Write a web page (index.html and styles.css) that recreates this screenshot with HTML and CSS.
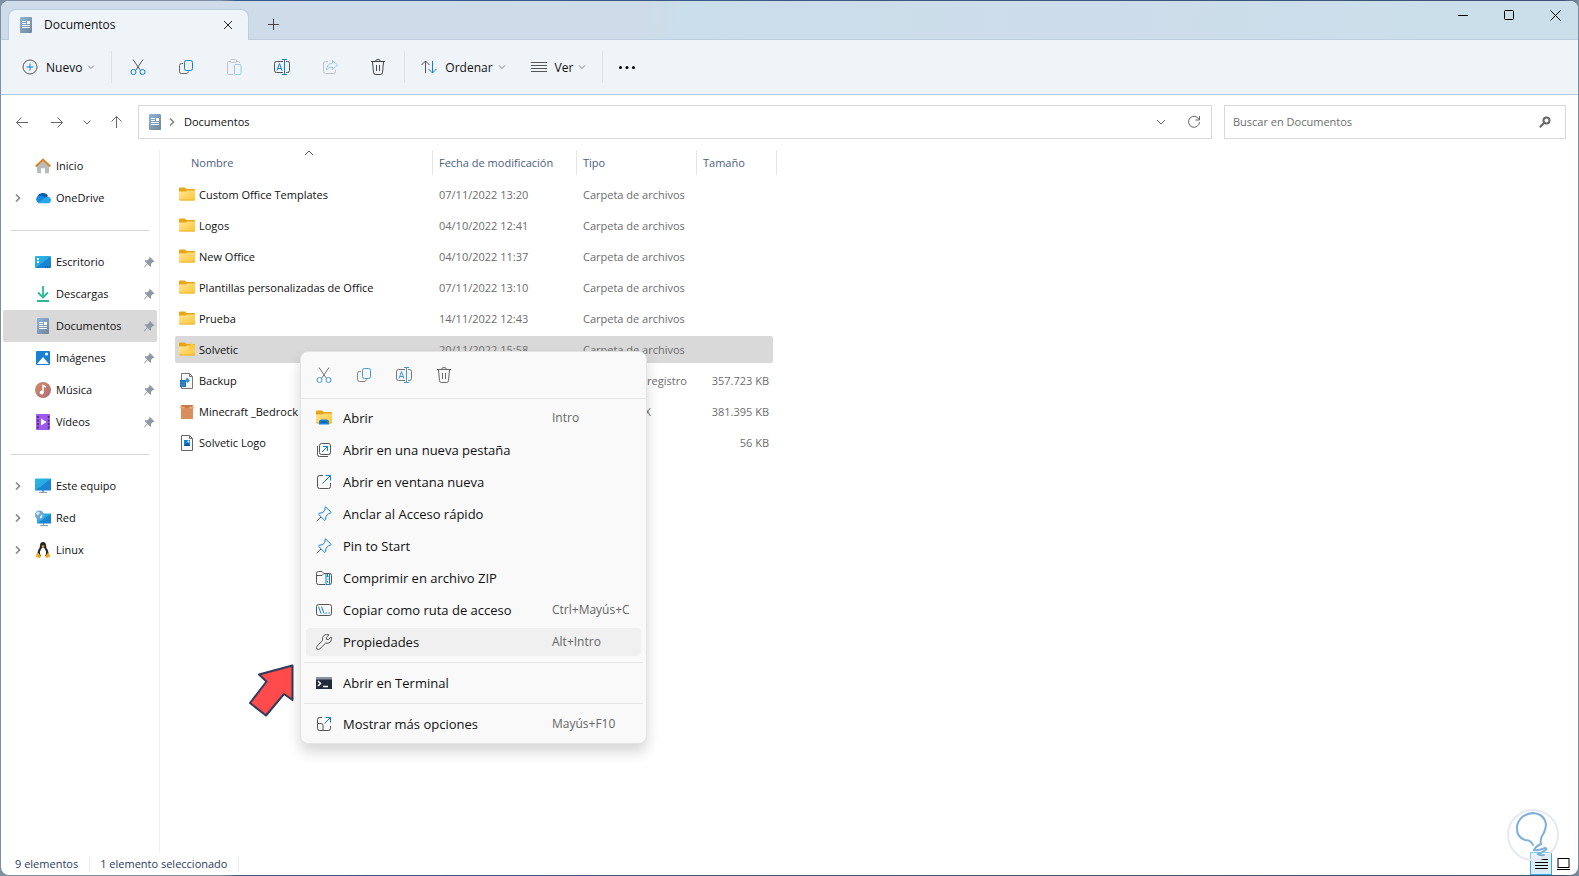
FILE: index.html
```html
<!DOCTYPE html>
<html lang="es">
<head>
    <meta charset="UTF-8">
    <meta name="viewport" content="width=device-width, initial-scale=1.0">
    <title>Documentos</title>
    <link rel="stylesheet" href="styles.css">
</head>
<body>
    <!-- Shared icons -->
    <svg class="sprite" aria-hidden="true">
        <defs>
            <linearGradient id="docFill" x1="0" y1="0" x2="1" y2="1">
                <stop offset="0" stop-color="#8fb4d9"/>
                <stop offset="1" stop-color="#6f8596"/>
            </linearGradient>
            <linearGradient id="folderFill" x1="0" y1="0" x2="1" y2="1">
                <stop offset="0" stop-color="#ffe59a"/>
                <stop offset="1" stop-color="#ffc52e"/>
            </linearGradient>
            <linearGradient id="screenFill" x1="0" y1="0" x2="1" y2="1">
                <stop offset="0" stop-color="#2fb9e8"/>
                <stop offset="0.5" stop-color="#26a9df"/>
                <stop offset="0.52" stop-color="#1a86d6"/>
                <stop offset="1" stop-color="#1a7fd2"/>
            </linearGradient>
            <linearGradient id="musicFill" x1="0" y1="0" x2="1" y2="1">
                <stop offset="0" stop-color="#d08f63"/>
                <stop offset="1" stop-color="#ad6b7b"/>
            </linearGradient>
        </defs>
        <symbol id="doc" viewBox="0 0 16 16">
            <rect x="2" width="12" height="16" rx="1" fill="url(#docFill)"/>
            <path d="M4 4.500h4M4 6.500h4M4 8.500h8M4 10.500h8" stroke="#fff"/>
            <path d="M9 4h3v3H9z" fill="#fff"/>
        </symbol>
        <symbol id="folder" viewBox="0 0 16 16">
            <path d="M0 1.500q0-1 1-1h5l1.500 1.500H15q1 0 1 1V6H0z" fill="#e8a517"/>
            <path d="M0 4.500h7l1-1h8v9q0 1-1 1H1q-1 0-1-1z" fill="url(#folderFill)"/>
            <path d="M0 12.500h16q0 1-1 1H1q-1 0-1-1z" fill="#e9b536"/>
        </symbol>
        <symbol id="cut" viewBox="0 0 16 16">
            <path d="M3 .5l7.500 11M13 .5L5.500 11.500" fill="none" stroke="#555"/>
            <circle cx="3.500" cy="13" r="2.500" fill="none" stroke="#0f7fd6"/>
            <circle cx="12.500" cy="13" r="2.500" fill="none" stroke="#0f7fd6"/>
        </symbol>
        <symbol id="copy" viewBox="0 0 16 16">
            <path d="M5 4.500H3.500q-2 0-2 2v6q0 2 2 2H8q2 0 2.500-2" fill="none" stroke="#666"/>
            <rect x="6.500" y="1.500" width="8" height="10" rx="2" fill="none" stroke="#0f7fd6"/>
        </symbol>
        <symbol id="paste" viewBox="0 0 16 16">
            <path d="M4.500 2.500h-2q-1 0-1 1v11q0 1 1 1H7M10.500 2.500h2q1 0 1 1V4" fill="none" stroke="#c0c3c6"/>
            <rect x="4.500" y=".5" width="6" height="3" rx="1" fill="none" stroke="#c0c3c6"/>
            <rect x="8.500" y="5.500" width="6.500" height="10" rx="1" fill="none" stroke="#9cc9ea"/>
        </symbol>
        <symbol id="rename" viewBox="0 0 16 16">
            <path d="M9 2.500H2.500q-2 0-2 2v7q0 2 2 2H9M12 2.500h1.500q2 0 2 2v7q0 2-2 2H12" fill="none" stroke="#555"/>
            <path d="M8 .5h5M8 15.500h5M10.500.5v15M3 11.500l2.500-7 2.500 7M4 9.500h3" fill="none" stroke="#0f7fd6"/>
        </symbol>
        <symbol id="share" viewBox="0 0 16 16">
            <path d="M6 2.500H3.500q-2 0-2 2v8q0 2 2 2h8q2 0 2-2V11" fill="none" stroke="#c0c3c6"/>
            <path d="M10.500 1.500l5 4.500-5 4.500V8Q6.500 8 4.500 11q.5-6.500 6-7z" fill="none" stroke="#9cc9ea" stroke-linejoin="round"/>
        </symbol>
        <symbol id="trash" viewBox="0 0 16 16">
            <path d="M1 2.500h14M5.500 2.500q0-2 2.500-2t2.500 2M2.500 3l1 10.500q.2 2 2 2h5q1.800 0 2-2L13.500 3M6.500 6v6M9.500 6v6" fill="none" stroke="#444"/>
        </symbol>
        <symbol id="chev-down" viewBox="0 0 8 8">
            <path d="M1 2.500l3 3 3-3" fill="none" stroke="currentColor"/>
        </symbol>
        <symbol id="chev-right" viewBox="0 0 8 8">
            <path d="M2 .5L5.500 4 2 7.500" fill="none" stroke="currentColor" stroke-width="1.600"/>
        </symbol>
        <symbol id="pin" viewBox="0 0 12 12">
            <path d="M7 1l4.500 4.500-1 .5-1 .2-1.500 1.700.1 2.100-.8.800-2.800-2.800L1.500 11.500l-.6-.5L4 7.300 1.500 5l.8-.8 2.400.1L6.200 2.800 6.400 1.600z" fill="#8d99a5"/>
        </symbol>
        <symbol id="pin-line" viewBox="0 0 16 16">
            <path d="M9.500.8l5.700 5.700-1 .8-1.500.2-2.700 2.800-.3 3.200-1 .9-6.300-6.200.9-1.100 3.300-.3 2.300-2.600.1-2.100z" fill="none" stroke="#0f7fd6" stroke-linejoin="round"/>
            <path d="M5 11L.7 15.300" stroke="#555"/>
        </symbol>
        <symbol id="monitor" viewBox="0 0 16 16">
            <path d="M7 12h2v2.500H7z" fill="#8da0ac"/>
            <path d="M4 14.500h8" stroke="#8da0ac"/>
            <rect x="0" y=".5" width="16" height="12" rx=".5" fill="url(#screenFill)"/>
        </symbol>
    </svg>

    <div class="window">
        <header class="titlebar">
            <div class="tab">
                <svg class="icon"><use href="#doc"/></svg>
                <span class="tab-title">Documentos</span>
                <button class="tab-close" aria-label="Cerrar pestaña">
                    <svg width="10" height="10" viewBox="0 0 10 10"><path d="M1 1l8 8M9 1L1 9" stroke="#222"/></svg>
                </button>
            </div>
            <button class="new-tab" aria-label="Nueva pestaña">
                <svg width="11" height="11" viewBox="0 0 11 11"><path d="M5.500 0v11M0 5.500h11" stroke="#444"/></svg>
            </button>
            <div class="window-controls">
                <button aria-label="Minimizar"><svg width="11" height="11" viewBox="0 0 11 11"><path d="M0 5.500h10" stroke="#000"/></svg></button>
                <button aria-label="Maximizar"><svg width="11" height="11" viewBox="0 0 11 11"><rect x=".5" y=".5" width="9" height="9" rx="1" fill="none" stroke="#000"/></svg></button>
                <button aria-label="Cerrar"><svg width="11" height="11" viewBox="0 0 11 11"><path d="M.5.5l10 10M10.500.5l-10 10" stroke="#000"/></svg></button>
            </div>
        </header>

        <div class="toolbar">
            <button class="tool tool-new">
                <svg class="icon" viewBox="0 0 16 16"><circle cx="8" cy="8" r="7" fill="none" stroke="#555"/><path d="M8 4.500v7M4.500 8h7" stroke="#0f7fd6"/></svg>
                <span>Nuevo</span>
                <svg class="chev"><use href="#chev-down"/></svg>
            </button>
            <div class="tool-group">
                <button class="tool-icon" aria-label="Cortar"><svg class="icon"><use href="#cut"/></svg></button>
                <button class="tool-icon" aria-label="Copiar"><svg class="icon"><use href="#copy"/></svg></button>
                <button class="tool-icon" aria-label="Pegar"><svg class="icon"><use href="#paste"/></svg></button>
                <button class="tool-icon" aria-label="Cambiar nombre"><svg class="icon"><use href="#rename"/></svg></button>
                <button class="tool-icon" aria-label="Compartir"><svg class="icon"><use href="#share"/></svg></button>
                <button class="tool-icon" aria-label="Eliminar"><svg class="icon"><use href="#trash"/></svg></button>
            </div>
            <div class="tool-group tool-views">
                <button class="tool">
                    <svg class="icon" viewBox="0 0 16 16"><path d="M4.500 14V2M.5 6l4-4 4 4" fill="none" stroke="#555"/><path d="M11.500 2v12M7.500 10l4 4 4-4" fill="none" stroke="#0f7fd6"/></svg>
                    <span>Ordenar</span>
                    <svg class="chev"><use href="#chev-down"/></svg>
                </button>
                <button class="tool">
                    <svg class="icon" viewBox="0 0 16 16"><path d="M0 3.500h16M0 6.500h16M0 9.500h16M0 12.500h16" stroke="#555"/></svg>
                    <span>Ver</span>
                    <svg class="chev"><use href="#chev-down"/></svg>
                </button>
            </div>
            <button class="tool-more" aria-label="Ver más">
                <svg class="icon" viewBox="0 0 16 16"><circle cx="1.500" cy="8.500" r="1.500"/><circle cx="8" cy="8.500" r="1.500"/><circle cx="14.500" cy="8.500" r="1.500"/></svg>
            </button>
        </div>

        <nav class="address-row">
            <div class="nav-buttons">
                <button aria-label="Atrás"><svg width="14" height="14" viewBox="0 0 14 14"><path d="M13 7.500H1.500M6.500 2.500l-5 5 5 5"/></svg></button>
                <button aria-label="Adelante"><svg width="14" height="14" viewBox="0 0 14 14"><path d="M1 7.500h11.500M7.500 2.500l5 5-5 5"/></svg></button>
                <button class="nav-recent" aria-label="Ubicaciones recientes"><svg width="10" height="10" viewBox="0 0 10 10"><path d="M1.500 3.500L5 7l3.500-3.500"/></svg></button>
                <button aria-label="Subir"><svg width="14" height="14" viewBox="0 0 14 14"><path d="M7.500 13V1.500M2.500 6.500l5-5 5 5"/></svg></button>
            </div>
            <div class="address">
                <svg class="icon"><use href="#doc"/></svg>
                <svg class="chev crumb"><use href="#chev-right"/></svg>
                <a href="#">Documentos</a>
                <button class="address-drop" aria-label="Ubicaciones anteriores"><svg width="10" height="10" viewBox="0 0 10 10"><path d="M1 3l4 4 4-4"/></svg></button>
                <button aria-label="Actualizar"><svg width="14" height="14" viewBox="0 0 14 14"><path d="M12 4.500A5.500 5.500 0 1 0 12.500 7M12.500 1v4h-4"/></svg></button>
            </div>
            <div class="search">
                <input type="search" placeholder="Buscar en Documentos" aria-label="Buscar en Documentos">
                <svg width="12" height="12" viewBox="0 0 12 12"><circle cx="7.500" cy="4.500" r="3"/><path d="M5.500 6.500L.8 11.200"/></svg>
            </div>
        </nav>

        <main class="content">
            <aside class="sidebar">
                <a class="place" href="#">
                    <svg class="icon" viewBox="0 0 16 16"><path d="M2 7.500l6-6 6 6v7q0 .8-.8.800H10v-5H6v5H2.800q-.8 0-.8-.8z" fill="#b9bbbd"/><path d="M.7 8.500L8 1.500l7.300 7" fill="none" stroke="#d98324" stroke-width="1.800"/></svg>
                    <span>Inicio</span>
                </a>
                <a class="place" href="#">
                    <svg class="chev expand"><use href="#chev-right"/></svg>
                    <svg class="icon" viewBox="0 0 16 16"><path d="M2.500 7a5.500 4.800 0 0 1 10.500-1L9 10z" fill="#0f5cab"/><path d="M4 13a3.800 3.800 0 0 1-.5-7.200q3-.8 5.500 1.200l5 5z" fill="#1689db"/><path d="M2.500 13.200L11 7q4.500-.8 5 3 0 3-2.700 3.200z" fill="#28a8ea"/></svg>
                    <span>OneDrive</span>
                </a>
                <hr>
                <a class="place" href="#">
                    <svg class="icon" viewBox="0 0 16 16"><rect y="2" width="16" height="12" rx="1" fill="url(#screenFill)"/><path d="M2 4h2v2H2zM2 7h2v2H2z" fill="#fff"/><path d="M10 13h1M12 13h1M14 13h1" stroke="#103f70"/></svg>
                    <span>Escritorio</span>
                    <svg class="pin"><use href="#pin"/></svg>
                </a>
                <a class="place" href="#">
                    <svg class="icon" viewBox="0 0 16 16"><path d="M8 0v11M3 6.500l5 5 5-5M2 15h12" fill="none" stroke="#2bb894" stroke-width="1.800"/></svg>
                    <span>Descargas</span>
                    <svg class="pin"><use href="#pin"/></svg>
                </a>
                <a class="place selected" href="#">
                    <svg class="icon"><use href="#doc"/></svg>
                    <span>Documentos</span>
                    <svg class="pin"><use href="#pin"/></svg>
                </a>
                <a class="place" href="#">
                    <svg class="icon" viewBox="0 0 16 16"><rect x="1" y="1" width="14" height="14" rx="1" fill="#1781d4"/><path d="M2 14l6-7 6 7z" fill="#fff"/><circle cx="11.500" cy="4" r="1.500" fill="#fff"/></svg>
                    <span>Imágenes</span>
                    <svg class="pin"><use href="#pin"/></svg>
                </a>
                <a class="place" href="#">
                    <svg class="icon" viewBox="0 0 16 16"><circle cx="8" cy="8" r="8" fill="url(#musicFill)"/><circle cx="6.700" cy="10.500" r="2" fill="#fff"/><path d="M8 10.500V3.500l3 1.500" fill="none" stroke="#fff" stroke-width="1.500"/></svg>
                    <span>Música</span>
                    <svg class="pin"><use href="#pin"/></svg>
                </a>
                <a class="place" href="#">
                    <svg class="icon" viewBox="0 0 16 16"><rect x="1" width="14" height="16" rx="1" fill="#9f5aeb"/><path d="M6 4.500l5.500 3.500L6 11.500z" fill="#fff"/><path d="M3 2v13M13.500 2v13" stroke="#432367" stroke-width="1.500" stroke-dasharray="2 1.500"/></svg>
                    <span>Vídeos</span>
                    <svg class="pin"><use href="#pin"/></svg>
                </a>
                <hr>
                <a class="place" href="#">
                    <svg class="chev expand"><use href="#chev-right"/></svg>
                    <svg class="icon"><use href="#monitor"/></svg>
                    <span>Este equipo</span>
                </a>
                <a class="place" href="#">
                    <svg class="chev expand"><use href="#chev-right"/></svg>
                    <svg class="icon" viewBox="0 0 16 16"><path d="M8.500 13v2M5 15.500h8" stroke="#8da0ac"/><rect x="2" y="3.500" width="14" height="10" fill="url(#screenFill)"/><circle cx="4.500" cy="5" r="4.500" fill="#6fa9d3"/><path d="M2 2q2.500-1 3 1L3 5.500 1 4zM5 6l2.500-1.500L7 7.500 5 8.500z" fill="#d5e8f4"/></svg>
                    <span>Red</span>
                </a>
                <a class="place" href="#">
                    <svg class="chev expand"><use href="#chev-right"/></svg>
                    <svg class="icon" viewBox="0 0 16 16"><path d="M8 0q3 0 3 3.500 0 2 1.500 4Q14 10 13.500 14h-11Q2 10 3.500 7.500 5 5.500 5 3.500 5 0 8 0z" fill="#252525"/><path d="M8 5q2 1 3 4.500.5 3-1 4.500H6q-1.500-1.500-1-4.500Q6 6 8 5z" fill="#fff"/><path d="M6.300 4L8 3l1.700 1L8 5.500zM3 10.500l3 4-1 1.500-4-1 .5-3zM13 10.500l-2.500 3.500.5 2 4-1-.5-3z" fill="#f3a71c"/></svg>
                    <span>Linux</span>
                </a>
            </aside>

            <section class="files">
                <table class="file-table">
                    <colgroup>
                        <col class="col-name">
                        <col class="col-date">
                        <col class="col-type">
                        <col class="col-size">
                    </colgroup>
                    <thead>
                        <tr>
                            <th><div class="head head-name">Nombre<svg class="sort" viewBox="0 0 10 6"><path d="M1 5l4-4 4 4" fill="none" stroke="#555"/></svg></div></th>
                            <th><div class="head">Fecha de modificación</div></th>
                            <th><div class="head">Tipo</div></th>
                            <th><div class="head head-size">Tamaño</div></th>
                        </tr>
                    </thead>
                    <tbody>
                        <tr>
                            <td><a class="file" href="#"><svg class="icon"><use href="#folder"/></svg>Custom Office Templates</a></td>
                            <td>07/11/2022 13:20</td><td>Carpeta de archivos</td><td></td>
                        </tr>
                        <tr>
                            <td><a class="file" href="#"><svg class="icon"><use href="#folder"/></svg>Logos</a></td>
                            <td>04/10/2022 12:41</td><td>Carpeta de archivos</td><td></td>
                        </tr>
                        <tr>
                            <td><a class="file" href="#"><svg class="icon"><use href="#folder"/></svg>New Office</a></td>
                            <td>04/10/2022 11:37</td><td>Carpeta de archivos</td><td></td>
                        </tr>
                        <tr>
                            <td><a class="file" href="#"><svg class="icon"><use href="#folder"/></svg>Plantillas personalizadas de Office</a></td>
                            <td>07/11/2022 13:10</td><td>Carpeta de archivos</td><td></td>
                        </tr>
                        <tr>
                            <td><a class="file" href="#"><svg class="icon"><use href="#folder"/></svg>Prueba</a></td>
                            <td>14/11/2022 12:43</td><td>Carpeta de archivos</td><td></td>
                        </tr>
                        <tr class="selected">
                            <td><a class="file" href="#"><svg class="icon" viewBox="0 0 16 16"><use href="#folder"/><path d="M12 0l2 2.500 2 .5V8l-3-1.500L9.500 7z" fill="#ffc93c"/></svg>Solvetic</a></td>
                            <td>20/11/2022 15:58</td><td>Carpeta de archivos</td><td></td>
                        </tr>
                        <tr>
                            <td><a class="file" href="#"><svg class="icon" viewBox="0 0 16 16"><path d="M2.500.5h8l3 3v12h-11z" fill="#fafafa" stroke="#777"/><path d="M10.500.5v3h3" fill="none" stroke="#777"/><path d="M1 7h6v7H1z" fill="#1769b0"/><path d="M3 7v7M5 7v7M1 9.500h6M1 12h6" stroke="#5ba9dd" stroke-width=".5"/><path d="M8 4.500l3 3-2.500 2.500L6 7.500z" fill="#3294cf"/></svg>Backup</a></td>
                            <td></td><td>Entradas de registro</td><td>357.723 KB</td>
                        </tr>
                        <tr>
                            <td><a class="file" href="#"><svg class="icon" viewBox="0 0 16 16"><path d="M2 3h12v12H2z" fill="#d98f5c"/><path d="M2 1h12v3H2z" fill="#c67c4d"/><path d="M2 1L.5 4.500H5L6 3h4l1 1.500h4.500L14 1l-1.500 2h-9z" fill="#e7ad7d"/></svg>Minecraft _Bedrock</a></td>
                            <td></td><td>Archivo APPX</td><td>381.395 KB</td>
                        </tr>
                        <tr>
                            <td><a class="file" href="#"><svg class="icon" viewBox="0 0 16 16"><path d="M2.500.5h8l3 3v12h-11z" fill="#fafafa" stroke="#666"/><path d="M10.500.5v3h3" fill="none" stroke="#666"/><path d="M5 5h6v6H5z" fill="#1781d4"/><path d="M5 11l3-3 3 3z" fill="#0d4d91"/><circle cx="9.500" cy="6.500" r="1" fill="#fff"/></svg>Solvetic Logo</a></td>
                            <td></td><td></td><td>56 KB</td>
                        </tr>
                    </tbody>
                </table>
            </section>

            <svg class="pointer" viewBox="0 0 48 56"><path d="M44.500 2.500L11 11.500l7.500 7L2 40l16 12.500L36 31l8.500 6z" fill="#ff4b4b" stroke="#2f3b5c" stroke-width="2" stroke-linejoin="round"/></svg>

            <div class="menu" role="menu">
                <div class="menu-bar">
                    <button aria-label="Cortar"><svg class="icon"><use href="#cut"/></svg></button>
                    <button aria-label="Copiar"><svg class="icon"><use href="#copy"/></svg></button>
                    <button aria-label="Cambiar nombre"><svg class="icon"><use href="#rename"/></svg></button>
                    <button aria-label="Eliminar"><svg class="icon"><use href="#trash"/></svg></button>
                </div>
                <div class="menu-group menu-main">
                    <button class="menu-item" role="menuitem">
                        <svg class="icon" viewBox="0 0 16 16"><use href="#folder"/><path d="M3 14.500v-2.500Q3 9.500 5.500 9.500h5q2.500 0 2.500 2.500v2.500z" fill="#1781d4"/><path d="M5 12h6" stroke="#0d4d91"/></svg>
                        <span>Abrir</span><kbd>Intro</kbd>
                    </button>
                    <button class="menu-item" role="menuitem">
                        <svg class="icon" viewBox="0 0 16 16"><rect x="3.500" y="1.500" width="11" height="11" rx="2" fill="none" stroke="#555"/><path d="M1.500 4v8.500q0 2 2 2H12" fill="none" stroke="#555"/><path d="M6 10l5.500-5.500M7 4.500h4.500V9" fill="none" stroke="#0f7fd6"/></svg>
                        <span>Abrir en una nueva pestaña</span>
                    </button>
                    <button class="menu-item" role="menuitem">
                        <svg class="icon" viewBox="0 0 16 16"><path d="M7 1.500H3.500q-2 0-2 2v9q0 2 2 2h9q2 0 2-2V9" fill="none" stroke="#555"/><path d="M6.500 9.500l8-8M9.500 1.500h5v5" fill="none" stroke="#0f7fd6"/></svg>
                        <span>Abrir en ventana nueva</span>
                    </button>
                    <button class="menu-item" role="menuitem">
                        <svg class="icon"><use href="#pin-line"/></svg>
                        <span>Anclar al Acceso rápido</span>
                    </button>
                    <button class="menu-item" role="menuitem">
                        <svg class="icon"><use href="#pin-line"/></svg>
                        <span>Pin to Start</span>
                    </button>
                    <button class="menu-item" role="menuitem">
                        <svg class="icon" viewBox="0 0 16 16"><path d="M9.500 14.500h-7q-2 0-2-2v-9q0-2 2-2H6l2 2h5.500q2 0 2 2v7q0 2-2 2M.5 5.500H6l2-2" fill="none" stroke="#555"/><path d="M10 4v10.500h3.500V4M11.500 4v2M10.500 6.500h2M11.500 9h1M11.500 11v1.500" fill="none" stroke="#0f7fd6"/></svg>
                        <span>Comprimir en archivo ZIP</span>
                    </button>
                    <button class="menu-item" role="menuitem">
                        <svg class="icon" viewBox="0 0 16 16"><rect x=".5" y="2.500" width="15" height="11" rx="2" fill="none" stroke="#555"/><path d="M2.500 4.500l2.500 7M5.500 4.500l2.500 7M9.500 11h1.500M12.500 11H14" fill="none" stroke="#0f7fd6"/></svg>
                        <span>Copiar como ruta de acceso</span><kbd>Ctrl+Mayús+C</kbd>
                    </button>
                    <button class="menu-item active" role="menuitem">
                        <svg class="icon" viewBox="0 0 16 16"><path d="M13 .9a4.400 4.400 0 0 0-6.300 5.300L1 12.200a1.800 1.800 0 0 0 2.800 2.700l5.900-5.800A4.400 4.400 0 0 0 15.100 3l-2.600 2.500-2-.1-.1-2z" fill="none" stroke="#555" stroke-linejoin="round"/></svg>
                        <span>Propiedades</span><kbd>Alt+Intro</kbd>
                    </button>
                </div>
                <div class="menu-group">
                    <button class="menu-item" role="menuitem">
                        <svg class="icon" viewBox="0 0 16 16"><rect y="2" width="16" height="12" fill="#222a3c"/><path d="M0 2h16v2.500H0z" fill="#8c9199"/><path d="M2 6l2.500 2.500L2 11M7 11.500h5" fill="none" stroke="#fff" stroke-width="1.500"/></svg>
                        <span>Abrir en Terminal</span>
                    </button>
                </div>
                <div class="menu-group">
                    <button class="menu-item" role="menuitem">
                        <svg class="icon" viewBox="0 0 16 16"><path d="M6 1.500H3.500q-2 0-2 2v9q0 2 2 2h9q2 0 2-2V10M1.500 7.500H5q2 0 2 2v5" fill="none" stroke="#555"/><path d="M8.500 7.500l6-6M9.500 1.500h5v5" fill="none" stroke="#0f7fd6"/></svg>
                        <span>Mostrar más opciones</span><kbd>Mayús+F10</kbd>
                    </button>
                </div>
            </div>
        </main>

        <footer class="statusbar">
            <span>9 elementos</span>
            <span>1 elemento seleccionado</span>
            <div class="view-buttons">
                <button class="view active" aria-label="Detalles"><svg width="13" height="12" viewBox="0 0 13 12"><path d="M0 1.500h13M0 4.500h13M0 7.500h13M0 10.500h13" stroke="#000"/></svg></button>
                <button class="view" aria-label="Iconos grandes"><svg width="13" height="12" viewBox="0 0 13 12"><rect x="1" y=".5" width="11" height="9" fill="none" stroke="#000"/><path d="M0 11.500h13" stroke="#000"/></svg></button>
            </div>
            <svg class="watermark" viewBox="0 0 52 52"><circle cx="26" cy="26" r="25" fill="#fff" fill-opacity=".4" stroke="#e6e9f2" stroke-width="2"/><path d="M26 36q-2-5-8-5Q9 28 10 17 13 5 26 4q12 1 13 12-1 7-4 11-2 4-1 8-6 3-7 6 3 1 11-2 5 1-7 6 2 2 6 1" fill="none" stroke="#7fb0d9" stroke-width="2" stroke-linecap="round"/></svg>
        </footer>
    </div>
</body>
</html>
```
FILE: styles.css
```css
* {
    box-sizing: border-box;
}

body {
    margin: 0;
    padding: 1px;
    background: linear-gradient(90deg, #7d90a2 0%, #7d90a2 14%, #3a5a8c 15%, #3f5474 99%, #7d90a2 100%);
    font-family: "Open Sans", "Noto Sans", sans-serif;
    font-size: 11px;
    line-height: 16px;
    color: #111;
}

button {
    display: flex;
    align-items: center;
    justify-content: center;
    padding: 0;
    border: none;
    background: none;
    font: inherit;
    color: inherit;
}

a {
    color: inherit;
    text-decoration: none;
}

svg {
    display: block;
    flex: none;
}

.sprite {
    position: absolute;
    width: 0;
    height: 0;
}

.icon {
    width: 16px;
    height: 16px;
}

.chev {
    width: 8px;
    height: 8px;
    color: #888;
}

.window {
    display: flex;
    flex-direction: column;
    height: calc(100vh - 2px);
    border-radius: 8px;
    background: #fff;
    overflow: hidden;
}

/* Title bar */
.titlebar {
    display: flex;
    align-items: flex-end;
    height: 39px;
    padding-left: 7px;
    background: linear-gradient(100deg, #cddce8 0%, #cddce8 41%, #cbdeeb 43%, #cddcea 70%, #cbdfeb 90%);
    box-shadow: inset 0 -1px #bccfdf;
    font-size: 12px;
    flex: none;
}

.tab {
    display: flex;
    align-items: center;
    width: 241px;
    height: 31px;
    padding: 0 13px 0 9px;
    border: 1px solid #bccfdf;
    border-bottom: none;
    border-radius: 8px 8px 0 0;
    background: #eff4f9;
}

.tab-title {
    flex: 1;
    margin-left: 10px;
}

.tab-close {
    width: 14px;
    height: 20px;
}

.new-tab {
    width: 48px;
    height: 31px;
}

.window-controls {
    display: flex;
    align-self: flex-start;
    margin-left: auto;
}

.window-controls button {
    width: 46px;
    height: 28px;
}

/* Toolbar */
.toolbar {
    display: flex;
    align-items: center;
    height: 55px;
    border-bottom: 1px solid #b5cadd;
    background: #eff4f9;
    font-size: 12px;
    flex: none;
}

.tool {
    height: 32px;
}

.tool span {
    margin: 0 5px 0 8px;
    padding-top: 1px;
}

.tool-new {
    padding: 0 16px 0 21px;
}

.tool-group {
    display: flex;
    align-items: center;
    height: 32px;
    padding: 0 10px;
    border-left: 1px solid #dde2e7;
    border-right: 1px solid #dde2e7;
    gap: 16px;
}

.tool-icon {
    width: 32px;
    height: 32px;
}

.tool-views {
    gap: 25px;
    padding: 0 16px;
    border-left: none;
}

.tool-more {
    width: 48px;
    height: 32px;
}

/* Address row */
.address-row {
    display: flex;
    align-items: center;
    height: 54px;
    padding-right: 12px;
    flex: none;
}

.address-row svg {
    fill: none;
    stroke: #666;
}

.address-row .icon,
.address-row .crumb {
    stroke: none;
}

.nav-buttons {
    display: flex;
    gap: 21px;
    padding: 0 15px 0 14px;
}

.nav-buttons .nav-recent {
    margin: 0 -4px 0 -3px;
}

.address {
    display: flex;
    align-items: center;
    flex: 1;
    height: 34px;
    padding: 0 10px 0 8px;
    border: 1px solid #d9d9d9;
}

.address a {
    flex: 1;
    margin-left: 8px;
}

.crumb {
    margin-left: 5px;
}

.address-drop {
    margin-right: 21px;
}

.search {
    display: flex;
    align-items: center;
    width: 342px;
    height: 34px;
    margin-left: 12px;
    padding: 0 14px 0 8px;
    border: 1px solid #d9d9d9;
}

.search input {
    flex: 1;
    padding: 0;
    border: none;
    outline: none;
    background: none;
    font: inherit;
}

.search input::placeholder {
    color: #6d6d6d;
}

.search svg {
    stroke-width: 2px;
}

/* Sidebar and file list */
.content {
    position: relative;
    display: flex;
    flex: 1;
    min-height: 0;
}

.sidebar {
    width: 159px;
    padding: 1px 2px 0;
    border-right: 1px solid #f0f0f0;
}

.sidebar hr {
    height: 1px;
    margin: 16px 8px 15px;
    border: none;
    background: #d6d6d6;
}

.place {
    display: flex;
    align-items: center;
    height: 32px;
    padding: 0 2px 0 32px;
    border-radius: 2px;
}

.place .pin {
    width: 12px;
    height: 12px;
    margin-left: auto;
}

.place span {
    margin-left: 5px;
}

.place .expand {
    margin: 0 13px 0 -21px;
}

.selected {
    background: #d9d9d9;
}

.files {
    flex: 1;
    padding-left: 15px;
}

.file-table {
    width: 598px;
    margin-top: -3px;
    border-collapse: separate;
    border-spacing: 0 4px;
    table-layout: fixed;
}

.col-name {
    width: 258px;
}

.col-date {
    width: 144px;
}

.col-type {
    width: 120px;
}

.file-table th {
    height: 27px;
    padding: 0;
    font-weight: normal;
    text-align: left;
    vertical-align: top;
    color: #4c607a;
}

.head {
    position: relative;
    height: 25px;
    padding: 5px 0 4px 6px;
    border-right: 1px solid #e5e5e5;
}

.head-name {
    padding-left: 16px;
}

.head-size {
    margin-right: -4px;
}

.sort {
    position: absolute;
    top: 0;
    left: 50%;
    width: 10px;
    height: 6px;
}

.file-table td {
    height: 27px;
    padding: 0 4px 0 6px;
    white-space: nowrap;
    color: #6d6d6d;
}

.file-table td:first-child {
    padding-left: 4px;
    border-radius: 2px 0 0 2px;
}

.file-table td:last-child {
    text-align: right;
    border-radius: 0 2px 2px 0;
}

.file {
    display: flex;
    align-items: center;
    gap: 4px;
    color: #111;
}

/* Context menu */
.menu {
    position: absolute;
    top: 202px;
    left: 299px;
    width: 347px;
    border: 1px solid #e3e3e3;
    border-radius: 8px;
    background: #f9f9f9;
    box-shadow: 0 8px 14px rgba(0, 0, 0, 0.16);
}

.menu-bar {
    display: flex;
    gap: 8px;
    height: 46px;
    padding: 0 7px;
}

.menu-bar button {
    width: 32px;
}

.menu-bar .icon {
    opacity: 0.8;
}

.menu-group {
    display: flex;
    flex-direction: column;
    gap: 4px;
    margin: 0 3px;
    padding: 6px 2px;
    border-top: 1px solid #e5e5e5;
}

.menu-main {
    margin: 0;
    padding: 5px 5px 6px;
}

.menu-group:last-child {
    padding-bottom: 5px;
}

.menu-item {
    justify-content: flex-start;
    height: 28px;
    padding: 0 10px;
    border-radius: 4px;
    font-size: 13px;
}

.menu-item span {
    width: 209px;
    margin-left: 11px;
    text-align: left;
    white-space: nowrap;
}

.menu-item kbd {
    font: inherit;
    font-size: 12px;
    color: #666;
}

.menu-item.active {
    background: #f0f0f0;
}

.pointer {
    position: absolute;
    top: 514px;
    left: 247px;
    width: 48px;
    height: 56px;
}

/* Status bar */
.statusbar {
    position: relative;
    display: flex;
    align-items: center;
    height: 23px;
    padding: 0 4px 0 14px;
    color: #2c3c5c;
    flex: none;
}

.statusbar span {
    margin-right: 10px;
    padding-right: 11px;
    border-right: 1px solid #ededed;
}

.view-buttons {
    display: flex;
    margin-left: auto;
}

.view {
    width: 22px;
    height: 23px;
}

.view.active {
    border: 1px solid #35acdc;
    background: #dcecf7;
}

.watermark {
    position: absolute;
    right: 19px;
    bottom: 14px;
    width: 52px;
    height: 52px;
}
```
